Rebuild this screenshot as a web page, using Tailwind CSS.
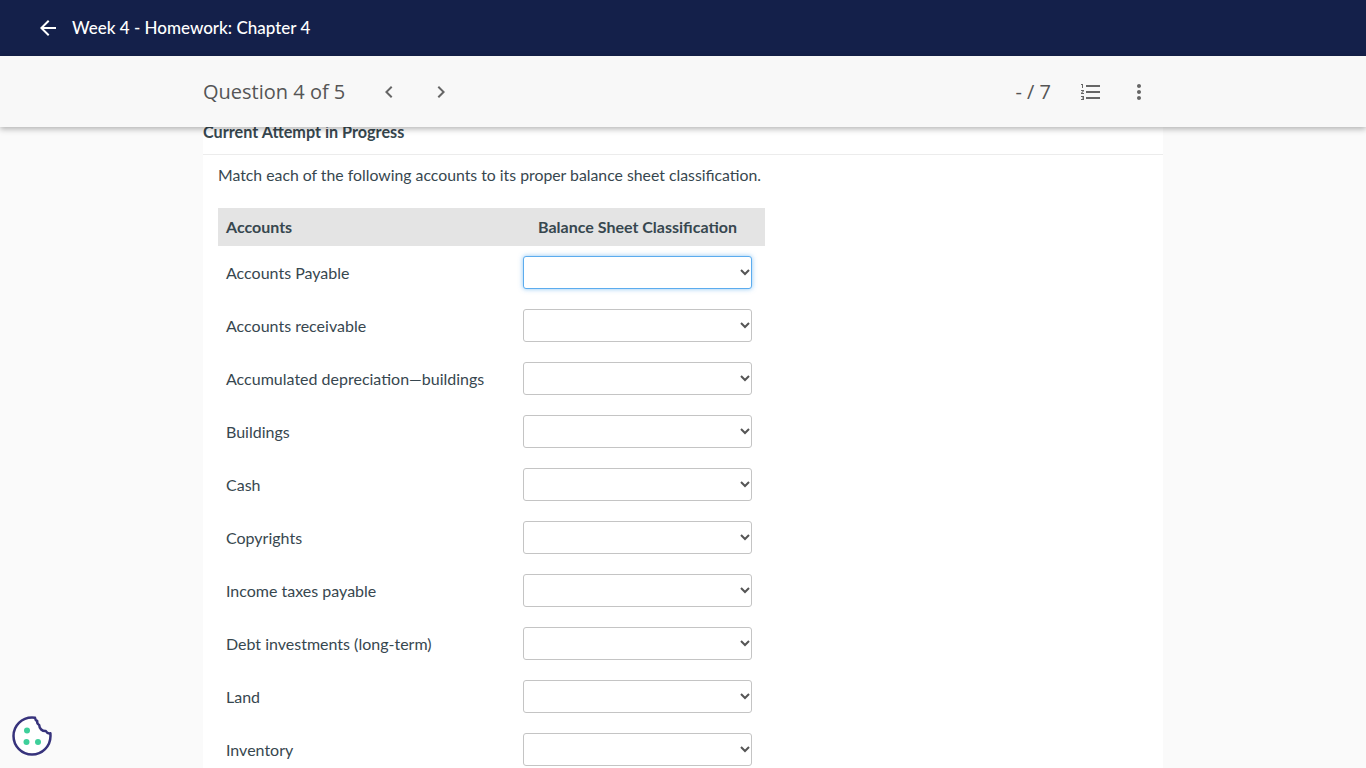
<!DOCTYPE html>
<html lang="en">
<head>
  <meta charset="UTF-8" />
  <title>Week 4 - Homework: Chapter 4</title>
  <script src="https://cdn.jsdelivr.net/npm/@tailwindcss/browser@4"></script>
</head>
<body class="relative h-screen overflow-hidden bg-[#fafafa] font-['Lato',sans-serif] text-[#37474f]">

  <!-- Top bar -->
  <header class="flex h-14 items-center bg-[#14204a] pl-[36px] text-white">
    <svg class="h-6 w-6" viewBox="0 0 24 24" fill="#fff"><path d="M20 11H7.83l5.59-5.59L12 4l-8 8 8 8 1.41-1.41L7.83 13H20v-2z"/></svg>
    <h1 class="ml-3 text-[17px] font-medium">Week 4 - Homework: Chapter 4</h1>
  </header>

  <!-- Question bar -->
  <div class="relative z-10 h-[71px] bg-[#f8f8f8] shadow-[0_2px_6px_rgba(0,0,0,0.3)]">
    <div class="mx-auto flex h-full w-[960px] items-center font-['Open_Sans',sans-serif] text-[#555]">
      <span class="text-[20px]">Question 4 of 5</span>
      <svg class="ml-[32px] h-6 w-6" viewBox="0 0 24 24" fill="#666"><path d="M15.41 7.41 14 6l-6 6 6 6 1.41-1.41L10.83 12z"/></svg>
      <svg class="ml-[28px] h-6 w-6" viewBox="0 0 24 24" fill="#666"><path d="M8.59 16.59 10 18l6-6-6-6-1.41 1.41L13.17 12z"/></svg>
      <span class="ml-auto text-[20px]">- / 7</span>
      <svg class="ml-[28px] h-6 w-6" viewBox="0 0 24 24" fill="#666"><path d="M2 17h2v.5H3v1h1v.5H2v1h3v-4H2v1zm1-9h1V4H2v1h1v3zm-1 3h1.8L2 13.1v.9h3v-1H3.2L5 10.9V10H2v1zm5-6v2h14V5H7zm0 14h14v-2H7v2zm0-6h14v-2H7v2z"/></svg>
      <svg class="ml-[24px] mr-[12px] h-6 w-6" viewBox="0 0 24 24" fill="#666"><path d="M12 8c1.1 0 2-.9 2-2s-.9-2-2-2-2 .9-2 2 .9 2 2 2zm0 2c-1.1 0-2 .9-2 2s.9 2 2 2 2-.9 2-2-.9-2-2-2zm0 6c-1.1 0-2 .9-2 2s.9 2 2 2 2-.9 2-2-.9-2-2-2z"/></svg>
    </div>
  </div>

  <!-- Question content -->
  <main class="mx-auto w-[960px] bg-white">
    <div class="h-[28px] border-b border-[#ececec] text-[16.2px] leading-[9px] font-bold text-[#37474f]">Current Attempt in Progress</div>
    <div class="px-[15px]">
      <p class="pt-[9px] text-[15.8px] leading-[22px]">Match each of the following accounts to its proper balance sheet classification.</p>

      <div class="mt-[22px] w-[547px] text-[16px]">
        <div class="flex h-[38px] items-center bg-[#e4e4e4] font-bold">
          <span class="w-[305px] pl-2">Accounts</span>
          <span class="w-[229px] text-center">Balance Sheet Classification</span>
        </div>

        <div class="flex h-[53px] items-center">
          <span class="w-[305px] pl-2 pt-[1px]">Accounts Payable</span>
          <select class="h-[33px] w-[229px] appearance-none rounded-[3px] border border-[#5cacee] bg-white bg-[url(data:image/svg+xml,%3Csvg%20xmlns=%27http://www.w3.org/2000/svg%27%20width=%2712%27%20height=%278%27%3E%3Cpath%20d=%27M2%202l4%204%204-4%27%20fill=%27none%27%20stroke=%27%23555%27%20stroke-width=%272%27/%3E%3C/svg%3E)] bg-no-repeat bg-[position:right_0px_top_11px] shadow-[0_0_5px_rgba(92,172,238,0.7)]"><option></option></select>
        </div>
        <div class="flex h-[53px] items-center">
          <span class="w-[305px] pl-2 pt-[1px]">Accounts receivable</span>
          <select class="h-[33px] w-[229px] appearance-none rounded-[3px] border border-[#c4c4c4] bg-white bg-[url(data:image/svg+xml,%3Csvg%20xmlns=%27http://www.w3.org/2000/svg%27%20width=%2712%27%20height=%278%27%3E%3Cpath%20d=%27M2%202l4%204%204-4%27%20fill=%27none%27%20stroke=%27%23555%27%20stroke-width=%272%27/%3E%3C/svg%3E)] bg-no-repeat bg-[position:right_0px_top_11px]"><option></option></select>
        </div>
        <div class="flex h-[53px] items-center">
          <span class="w-[305px] pl-2 pt-[1px]">Accumulated depreciation—buildings</span>
          <select class="h-[33px] w-[229px] appearance-none rounded-[3px] border border-[#c4c4c4] bg-white bg-[url(data:image/svg+xml,%3Csvg%20xmlns=%27http://www.w3.org/2000/svg%27%20width=%2712%27%20height=%278%27%3E%3Cpath%20d=%27M2%202l4%204%204-4%27%20fill=%27none%27%20stroke=%27%23555%27%20stroke-width=%272%27/%3E%3C/svg%3E)] bg-no-repeat bg-[position:right_0px_top_11px]"><option></option></select>
        </div>
        <div class="flex h-[53px] items-center">
          <span class="w-[305px] pl-2 pt-[1px]">Buildings</span>
          <select class="h-[33px] w-[229px] appearance-none rounded-[3px] border border-[#c4c4c4] bg-white bg-[url(data:image/svg+xml,%3Csvg%20xmlns=%27http://www.w3.org/2000/svg%27%20width=%2712%27%20height=%278%27%3E%3Cpath%20d=%27M2%202l4%204%204-4%27%20fill=%27none%27%20stroke=%27%23555%27%20stroke-width=%272%27/%3E%3C/svg%3E)] bg-no-repeat bg-[position:right_0px_top_11px]"><option></option></select>
        </div>
        <div class="flex h-[53px] items-center">
          <span class="w-[305px] pl-2 pt-[1px]">Cash</span>
          <select class="h-[33px] w-[229px] appearance-none rounded-[3px] border border-[#c4c4c4] bg-white bg-[url(data:image/svg+xml,%3Csvg%20xmlns=%27http://www.w3.org/2000/svg%27%20width=%2712%27%20height=%278%27%3E%3Cpath%20d=%27M2%202l4%204%204-4%27%20fill=%27none%27%20stroke=%27%23555%27%20stroke-width=%272%27/%3E%3C/svg%3E)] bg-no-repeat bg-[position:right_0px_top_11px]"><option></option></select>
        </div>
        <div class="flex h-[53px] items-center">
          <span class="w-[305px] pl-2 pt-[1px]">Copyrights</span>
          <select class="h-[33px] w-[229px] appearance-none rounded-[3px] border border-[#c4c4c4] bg-white bg-[url(data:image/svg+xml,%3Csvg%20xmlns=%27http://www.w3.org/2000/svg%27%20width=%2712%27%20height=%278%27%3E%3Cpath%20d=%27M2%202l4%204%204-4%27%20fill=%27none%27%20stroke=%27%23555%27%20stroke-width=%272%27/%3E%3C/svg%3E)] bg-no-repeat bg-[position:right_0px_top_11px]"><option></option></select>
        </div>
        <div class="flex h-[53px] items-center">
          <span class="w-[305px] pl-2 pt-[1px]">Income taxes payable</span>
          <select class="h-[33px] w-[229px] appearance-none rounded-[3px] border border-[#c4c4c4] bg-white bg-[url(data:image/svg+xml,%3Csvg%20xmlns=%27http://www.w3.org/2000/svg%27%20width=%2712%27%20height=%278%27%3E%3Cpath%20d=%27M2%202l4%204%204-4%27%20fill=%27none%27%20stroke=%27%23555%27%20stroke-width=%272%27/%3E%3C/svg%3E)] bg-no-repeat bg-[position:right_0px_top_11px]"><option></option></select>
        </div>
        <div class="flex h-[53px] items-center">
          <span class="w-[305px] pl-2 pt-[1px]">Debt investments (long-term)</span>
          <select class="h-[33px] w-[229px] appearance-none rounded-[3px] border border-[#c4c4c4] bg-white bg-[url(data:image/svg+xml,%3Csvg%20xmlns=%27http://www.w3.org/2000/svg%27%20width=%2712%27%20height=%278%27%3E%3Cpath%20d=%27M2%202l4%204%204-4%27%20fill=%27none%27%20stroke=%27%23555%27%20stroke-width=%272%27/%3E%3C/svg%3E)] bg-no-repeat bg-[position:right_0px_top_11px]"><option></option></select>
        </div>
        <div class="flex h-[53px] items-center">
          <span class="w-[305px] pl-2 pt-[1px]">Land</span>
          <select class="h-[33px] w-[229px] appearance-none rounded-[3px] border border-[#c4c4c4] bg-white bg-[url(data:image/svg+xml,%3Csvg%20xmlns=%27http://www.w3.org/2000/svg%27%20width=%2712%27%20height=%278%27%3E%3Cpath%20d=%27M2%202l4%204%204-4%27%20fill=%27none%27%20stroke=%27%23555%27%20stroke-width=%272%27/%3E%3C/svg%3E)] bg-no-repeat bg-[position:right_0px_top_11px]"><option></option></select>
        </div>
        <div class="flex h-[53px] items-center">
          <span class="w-[305px] pl-2 pt-[1px]">Inventory</span>
          <select class="h-[33px] w-[229px] appearance-none rounded-[3px] border border-[#c4c4c4] bg-white bg-[url(data:image/svg+xml,%3Csvg%20xmlns=%27http://www.w3.org/2000/svg%27%20width=%2712%27%20height=%278%27%3E%3Cpath%20d=%27M2%202l4%204%204-4%27%20fill=%27none%27%20stroke=%27%23555%27%20stroke-width=%272%27/%3E%3C/svg%3E)] bg-no-repeat bg-[position:right_0px_top_11px]"><option></option></select>
        </div>
      </div>
    </div>
  </main>

  <!-- Cookie settings button -->
  <button class="absolute bottom-[12px] left-[12px] h-10 w-10">
    <svg class="h-10 w-10" viewBox="0 0 40 40">
      <path d="M20 1.5c1 0 2.2.1 3 .3.2 1.500 1 2.700 2.200 3.200-.2 1.600.6 3.300 2 4 .1 3.600 3 6.300 6.600 6 .9 1.700 2.800 2.700 4.600 2.300.1.800.1 1.700.1 2.700 0 10.200-8.300 18.500-18.500 18.500S1.500 30.200 1.500 20 9.800 1.500 20 1.500z" fill="#fff" stroke="#37337c" stroke-width="2.500" stroke-linejoin="round"/>
      <circle cx="15" cy="14.500" r="3" fill="#3ecf9a"/>
      <circle cx="14.500" cy="26" r="3" fill="#3ecf9a"/>
      <circle cx="26" cy="26" r="3" fill="#3ecf9a"/>
    </svg>
  </button>
</body>
</html>
